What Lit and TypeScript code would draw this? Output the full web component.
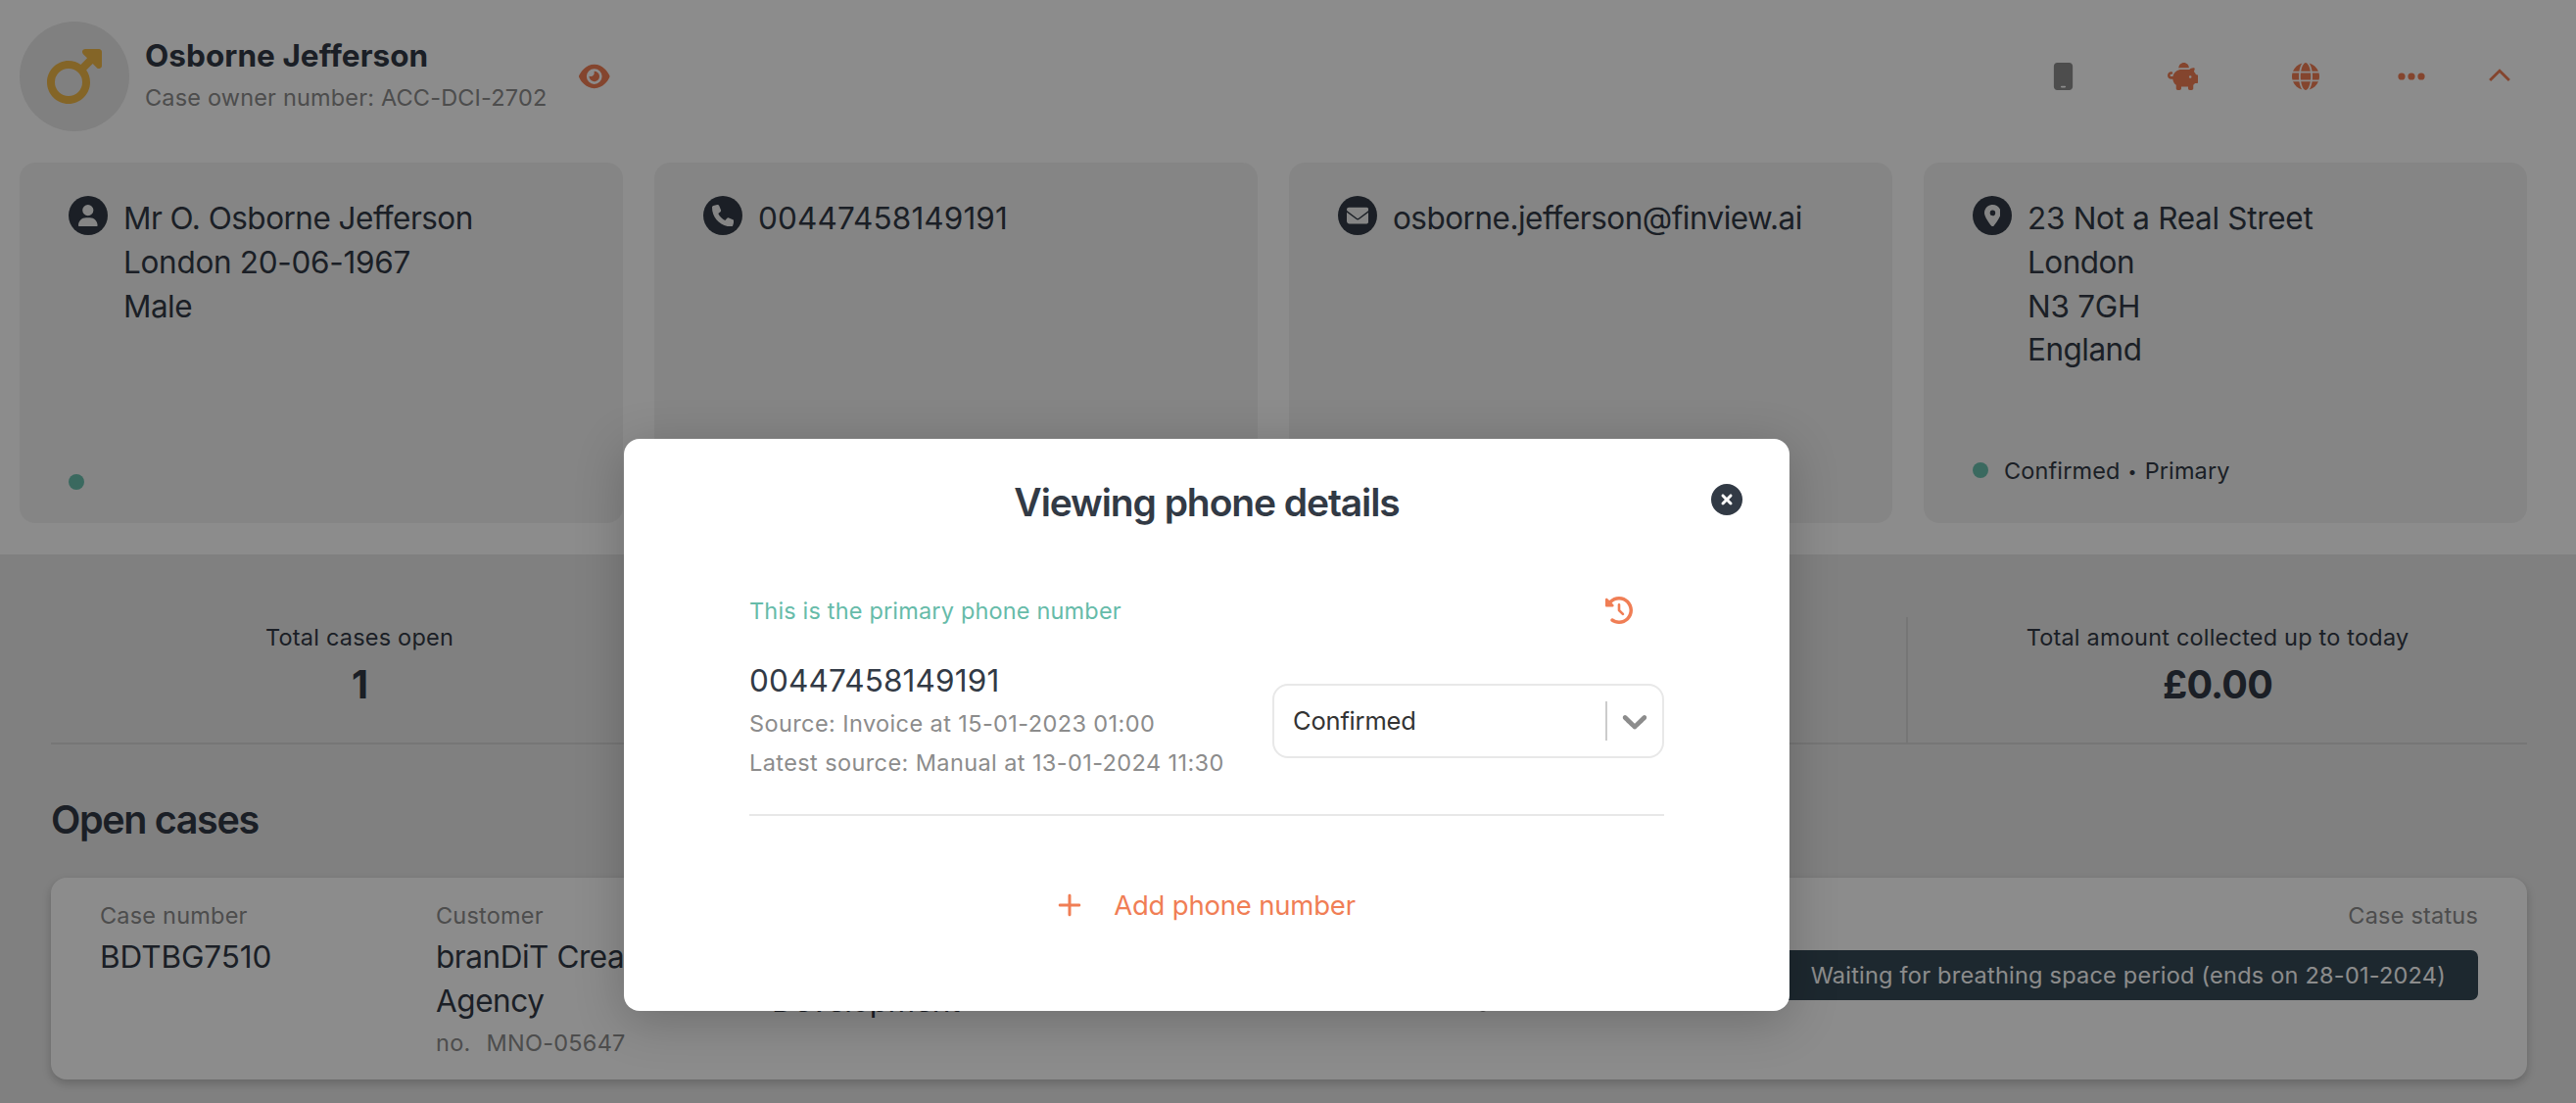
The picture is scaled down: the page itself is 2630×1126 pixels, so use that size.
import { LitElement, html, css, svg } from 'lit';
import { customElement, property } from 'lit/decorators.js';

// glyph outlines, [viewBox width, path], all on a 512 high box
const icons: Record<string, [number, string]> = {
  mars: [448, 'M289.8 46.8c3.7-9 12.5-14.8 22.2-14.8H424c13.3 0 24 10.7 24 24V168c0 9.7-5.8 18.5-14.8 22.2s-19.3 1.7-26.2-5.2l-33.4-33.4L321 204.2c19.5 28.4 31 62.7 31 99.8c0 97.2-78.8 176-176 176S0 401.2 0 304s78.8-176 176-176c37 0 71.4 11.4 99.8 31l52.6-52.6L295 73c-6.9-6.9-8.9-17.2-5.2-26.2zM176 416a112 112 0 1 0 0-224 112 112 0 1 0 0 224z'],
  eye: [576, 'M288 32c-80.8 0-145.5 36.8-192.6 80.6C48.6 156 17.3 208 2.5 243.7c-3.3 7.9-3.3 16.7 0 24.6C17.3 304 48.6 356 95.4 399.4C142.5 443.2 207.2 480 288 480s145.5-36.8 192.6-80.6c46.8-43.5 78.1-95.4 93-131.1c3.3-7.9 3.3-16.7 0-24.6c-14.9-35.7-46.2-87.7-93-131.1C433.5 68.8 368.8 32 288 32zM144 256a144 144 0 1 1 288 0 144 144 0 1 1 -288 0zm144-64c0 35.3-28.7 64-64 64c-7.1 0-13.9-1.2-20.3-3.3c-5.5-1.8-11.9 1.6-11.7 7.4c.3 6.9 1.3 13.8 3.2 20.7c13.7 51.2 66.4 81.6 117.6 67.9s81.6-66.4 67.9-117.6c-11.1-41.5-47.8-69.4-88.6-71.1c-5.8-.2-9.2 6.1-7.4 11.7c2.1 6.4 3.3 13.2 3.3 20.3z'],
  mobile: [384, 'M16 64C16 28.7 44.7 0 80 0H304c35.3 0 64 28.7 64 64V448c0 35.3-28.7 64-64 64H80c-35.3 0-64-28.7-64-64V64zM144 448c0 8.8 7.2 16 16 16h64c8.8 0 16-7.2 16-16s-7.2-16-16-16H160c-8.8 0-16 7.2-16 16z'],
  piggy: [576, 'M400 96l0 .7c-5.3-.4-10.6-.7-16-.7H256c-16.5 0-32.5 2.1-47.8 6c-.1-2-.2-4-.2-6c0-53 43-96 96-96s96 43 96 96zm-16 32c3.5 0 7 .1 10.4 .3c4.2 .3 8.4 .7 12.6 1.3C424.6 109.1 450.8 96 480 96h11.5c10.4 0 18 9.8 15.5 19.9l-13.8 55.2c15.8 14.8 28.7 32.8 37.5 52.9H544c17.7 0 32 14.3 32 32v96c0 17.7-14.3 32-32 32H512c-9.1 12.1-19.9 22.9-32 32v64c0 17.7-14.3 32-32 32H416c-17.7 0-32-14.3-32-32V448H256v32c0 17.7-14.3 32-32 32H192c-17.7 0-32-14.3-32-32V416c-34.9-26.2-58.7-66.3-63.2-112H68c-37.6 0-68-30.4-68-68s30.4-68 68-68h4c13.3 0 24 10.7 24 24s-10.7 24-24 24H68c-11 0-20 9-20 20s9 20 20 20H99.2c12.1-59.8 57.7-107.5 116.3-122.8c12.9-3.4 26.5-5.2 40.5-5.2H384zm64 136a24 24 0 1 0 -48 0 24 24 0 1 0 48 0z'],
  globe: [512, 'M352 256c0 22.2-1.2 43.6-3.3 64H163.3c-2.2-20.4-3.3-41.8-3.3-64s1.2-43.6 3.3-64H348.7c2.2 20.4 3.3 41.8 3.3 64zm28.8-64H503.9c5.3 20.5 8.1 41.9 8.1 64s-2.8 43.5-8.1 64H380.8c2.1-20.6 3.2-42 3.2-64s-1.1-43.4-3.2-64zm112.6-32H376.7c-10-63.9-29.8-117.4-55.3-151.6c78.3 20.7 142 77.5 171.9 151.6zm-149.1 0H167.7c6.1-36.4 15.5-68.6 27-94.7c10.5-23.6 22.2-40.7 33.5-51.5C239.4 3.2 248.7 0 256 0s16.6 3.2 27.8 13.8c11.3 10.8 23 27.9 33.5 51.5c11.6 26 20.9 58.2 27 94.7zm-209 0H18.6C48.6 85.9 112.2 29.1 190.6 8.4C165.1 42.6 145.3 96.1 135.3 160zM8.1 192H131.2c-2.1 20.6-3.2 42-3.2 64s1.1 43.4 3.2 64H8.1C2.8 299.5 0 278.1 0 256s2.8-43.5 8.1-64zM194.7 446.6c-11.6-26-20.9-58.2-27-94.6H344.3c-6.1 36.4-15.5 68.6-27 94.6c-10.5 23.6-22.2 40.7-33.5 51.5C272.6 508.8 263.3 512 256 512s-16.6-3.2-27.8-13.8c-11.3-10.8-23-27.9-33.5-51.5zM135.3 352c10 63.9 29.8 117.4 55.3 151.6C112.2 482.9 48.6 426.1 18.6 352H135.3zm358.1 0c-30 74.1-93.6 130.9-171.9 151.6c25.5-34.2 45.2-87.7 55.3-151.6H493.4z'],
  ellipsis: [512, 'M7 256a66 66 0 1 1 132 0a66 66 0 1 1-132 0zM190 256a66 66 0 1 1 132 0a66 66 0 1 1-132 0zM373 256a66 66 0 1 1 132 0a66 66 0 1 1-132 0z'],
  up: [512, 'M256 112L455 311L418 348L256 186L94 348L57 311z'],
  user: [448, 'M224 256A128 128 0 1 0 224 0a128 128 0 1 0 0 256zm-45.7 48C79.8 304 0 383.8 0 482.3C0 498.7 13.3 512 29.7 512H418.3c16.4 0 29.7-13.3 29.7-29.7C448 383.8 368.2 304 269.7 304H178.3z'],
  phone: [512, 'M164.9 24.6c-7.7-18.6-28-28.5-47.4-23.2l-88 24C12.1 30.2 0 46 0 64C0 311.4 200.6 512 448 512c18 0 33.8-12.1 38.6-29.5l24-88c5.3-19.4-4.6-39.7-23.2-47.4l-96-40c-16.3-6.8-35.2-2.1-46.3 11.6L304.7 368C234.3 334.7 177.3 277.7 144 207.3L193.3 167c13.7-11.2 18.4-30 11.6-46.3l-40-96z'],
  envelope: [512, 'M48 64C21.5 64 0 85.5 0 112c0 15.1 7.1 29.3 19.2 38.4L236.8 313.6c11.4 8.5 27 8.5 38.4 0L492.8 150.4c12.1-9.1 19.2-23.3 19.2-38.4c0-26.5-21.5-48-48-48H48zM0 176V384c0 35.3 28.7 64 64 64H448c35.3 0 64-28.7 64-64V176L294.4 339.2c-22.8 17.1-54 17.1-76.8 0L0 176z'],
  pin: [384, 'M215.7 499.2C267 435 384 279.4 384 192C384 86 298 0 192 0S0 86 0 192c0 87.4 117 243 168.3 307.2c12.3 15.3 35.1 15.3 47.4 0zM192 128a64 64 0 1 1 0 128 64 64 0 1 1 0-128z'],
  history: [512, 'M75 75L41 41C25.9 25.9 0 36.6 0 57.9V168c0 13.3 10.7 24 24 24H134.1c21.4 0 32.1-25.9 17-41l-30.8-30.8C155 85.5 203 64 256 64c106 0 192 86 192 192s-86 192-192 192c-40.8 0-78.6-12.7-109.7-34.4c-14.5-10.1-34.4-6.6-44.6 7.9s-6.6 34.4 7.9 44.6C151.2 495 201.7 512 256 512c141.4 0 256-114.6 256-256S397.4 0 256 0C185.3 0 121.3 28.7 75 75zm181 53c-13.3 0-24 10.7-24 24V256c0 6.4 2.5 12.5 7 17l72 72c9.4 9.4 24.6 9.4 33.9 0s9.4-24.6 0-33.9l-65-65V152c0-13.3-10.7-24-24-24z'],
  close: [512, 'M256 512A256 256 0 1 0 256 0a256 256 0 1 0 0 512zM175 175c9.4-9.4 24.6-9.4 33.9 0l47 47 47-47c9.4-9.4 24.6-9.4 33.9 0s9.4 24.6 0 33.9l-47 47 47 47c9.4 9.4 9.4 24.6 0 33.9s-24.6 9.4-33.9 0l-47-47-47 47c-9.4 9.4-24.6 9.4-33.9 0s-9.4-24.6 0-33.9l47-47-47-47c-9.4-9.4-9.4-24.6 0-33.9z'],
  plus: [512, 'M256 16c20 0 32 12 32 32V224H464c20 0 32 12 32 32s-12 32-32 32H288V464c0 20-12 32-32 32s-32-12-32-32V288H48c-20 0-32-12-32-32s12-32 32-32H224V48c0-20 12-32 32-32z'],
};

/**
 * Single glyph, scaled to the given height
 */
@customElement('fv-icon')
export class Icon extends LitElement {

  @property() name = '';

  @property({ type: Number }) size = 28;

  static styles = css`
    :host {
      display: inline-flex;
    }
    svg {
      display: block;
      fill: currentColor;
    }
  `;

  render () {
    const [width, path] = icons[this.name];

    return html`
      <svg width=${this.size * width / 512} height=${this.size} viewBox="0 0 ${width} 512">
        ${svg`<path fill-rule="evenodd" d=${path}></path>`}
      </svg>
    `;
  }

}

/**
 * Grey contact card: icon, a few lines of text and an optional status
 */
@customElement('fv-card')
export class Card extends LitElement {

  @property() icon = '';

  @property({ attribute: false }) lines: string[] = [];

  @property({ attribute: false }) status: string[] | null = null;

  static styles = css`
    :host {
      display: flex;
      flex-direction: column;
      justify-content: space-between;
      box-sizing: border-box;
      height: 368px;
      padding: 34px 50px;
      border-radius: 16px;
      background: #f3f3f3;
    }
    .top {
      display: flex;
      gap: 16px;
    }
    .badge {
      display: flex;
      align-items: center;
      justify-content: center;
      width: 40px;
      height: 40px;
      border-radius: 50%;
      background: #323a45;
      color: #f3f3f3;
    }
    .lines {
      padding-top: 1px;
      font-size: 31.5px;
      line-height: 44.8px;
      letter-spacing: -0.52px;
    }
    /* lines with figures are set a bit wider */
    .figures {
      letter-spacing: -0.3px;
    }
    .phone {
      letter-spacing: 0.12px;
    }
    .status {
      display: flex;
      align-items: center;
      font-size: 23.5px;
      line-height: 38px;
      letter-spacing: 0.12px;
    }
    .status span {
      padding-top: 2px;
    }
    .status .dot {
      box-sizing: border-box;
      width: 16px;
      height: 16px;
      margin-right: 16px;
      border-radius: 50%;
      background: #6bc0ae;
    }
    .bullet {
      margin: 1px 8px 0;
      font-size: 16px;
    }
  `;

  lineClass (line: string) {
    if (/^\d+$/.test(line)) return 'phone';
    return /\d/.test(line) ? 'figures' : '';
  }

  render () {

    return html`
      <div class="top">
        <div class="badge"><fv-icon name=${this.icon} size="22.4"></fv-icon></div>
        <div class="lines">${this.lines.map(line => html`<div class=${this.lineClass(line)}>${line}</div>`)}</div>
      </div>
      ${this.status ? html`
        <div class="status">
          <span class="dot"></span>
          ${this.status.map((part, i) => html`${i ? html`<span class="bullet">•</span>` : ''}<span>${part}</span>`)}
        </div>
      ` : ''}
    `;

  }

}

/**
 * Modal with the details of one phone number
 */
@customElement('fv-phone-modal')
export class PhoneModal extends LitElement {

  static styles = css`
    :host {
      display: block;
      box-sizing: border-box;
      width: 1190px;
      height: 584px;
      border-radius: 16px;
      background: #fff;
      box-shadow: 0 10px 50px rgba(0, 0, 0, 0.22);
    }
    .head {
      display: grid;
      grid-template-columns: 80px 1fr 80px;
      align-items: start;
      box-sizing: border-box;
      padding-top: 32px;
      height: 92px;
    }
    .head fv-icon {
      margin-top: 14px;
    }
    h2 {
      grid-column: 2;
      margin: 0;
      text-align: center;
      font-size: 39px;
      line-height: 65px;
      font-weight: 600;
      letter-spacing: -1.1px;
    }
    .body {
      padding: 0 128px;
    }
    .primary {
      display: flex;
      align-items: center;
      justify-content: space-between;
      padding: 65px 32px 0 0;
      height: 36px;
      font-size: 23.5px;
      letter-spacing: 0.17px;
      color: #66bba9;
    }
    .action {
      color: #f07e55;
    }
    .row {
      display: flex;
      align-items: center;
      justify-content: space-between;
      box-sizing: border-box;
      height: 192px;
      padding-bottom: 1px;
      border-bottom: 2px solid #e8e8e8;
    }
    .number {
      font-size: 31.5px;
      line-height: 46px;
      padding-bottom: 1px;
      letter-spacing: 0.15px;
    }
    .source {
      font-size: 23.5px;
      line-height: 40px;
      letter-spacing: 0.4px;
      color: #8c8c8c;
    }
    .select {
      display: flex;
      align-items: center;
      box-sizing: border-box;
      width: 400px;
      height: 76px;
      border: 2px solid #e8e8e8;
      border-radius: 16px;
      color: #333;
      font-size: 25.5px;
      letter-spacing: -0.2px;
    }
    .value {
      flex: 1;
      padding-left: 19px;
    }
    .separator {
      width: 2px;
      height: 40px;
      background: #ccc;
    }
    .arrow {
      display: block;
      margin: 0 7px;
      fill: #8c8c8c;
    }
    .add {
      display: flex;
      align-items: center;
      justify-content: center;
      gap: 33px;
      padding-top: 69px;
      height: 44px;
      font-size: 27.5px;
      letter-spacing: -0.2px;
    }
  `;

  render () {

    return html`
      <div class="head">
        <h2>Viewing phone details</h2>
        <fv-icon name="close" size="32"></fv-icon>
      </div>
      <div class="body">
        <div class="primary">
          <span>This is the primary phone number</span>
          <fv-icon class="action" name="history" size="28"></fv-icon>
        </div>
        <div class="row">
          <div>
            <div class="number">00447458149191</div>
            <div class="source">Source: Invoice at 15-01-2023 01:00</div>
            <div class="source">Latest source: Manual at 13-01-2024 11:30</div>
          </div>
          <div class="select">
            <span class="value">Confirmed</span>
            <span class="separator"></span>
            <svg class="arrow" width="42" height="42" viewBox="0 0 20 20">
              <path d="M4.516 7.548c0.436-0.446 1.043-0.481 1.576 0l3.908 3.747 3.908-3.747c0.533-0.481 1.141-0.446 1.574 0 0.436 0.445 0.408 1.197 0 1.615-0.406 0.418-4.695 4.502-4.695 4.502-0.217 0.223-0.502 0.335-0.787 0.335s-0.57-0.112-0.789-0.335c0 0-4.287-4.084-4.695-4.502s-0.436-1.17 0-1.615z"></path>
            </svg>
          </div>
        </div>
        <div class="add action">
          <fv-icon name="plus" size="24"></fv-icon>
          <span>Add phone number</span>
        </div>
      </div>
    `;

  }

}

@customElement('app-root')
export default class App extends LitElement {

  static styles = css`
    :host {
      display: block;
      position: relative;
      width: 2630px;
      height: 1126px;
      overflow: hidden;
      background: #e9e9e9;
      color: #323a45;
      font-family: Inter, "Liberation Sans", sans-serif;
      font-size: 23.5px;
      letter-spacing: 0.2px;
    }
    .profile {
      box-sizing: border-box;
      height: 566px;
      padding: 22px 50px 0 20px;
      background: #fff;
    }
    .bar {
      display: flex;
      align-items: center;
      height: 112px;
    }
    .avatar {
      display: flex;
      align-items: center;
      justify-content: center;
      width: 112px;
      height: 112px;
      border-radius: 50%;
      background: #e9e9e9;
      color: #f0b848;
    }
    .owner {
      margin-left: 16px;
      width: 443px;
    }
    .name {
      font-size: 31.5px;
      line-height: 41px;
      padding-bottom: 3px;
      font-weight: 700;
      letter-spacing: 0.05px;
    }
    .muted {
      color: #8c8c8c;
    }
    .ref {
      line-height: 40px;
      letter-spacing: 0.17px;
    }
    .action {
      color: #f07e55;
    }
    .tools {
      display: flex;
      align-items: center;
      margin-left: auto;
      padding-right: 14px;
    }
    .tools fv-icon {
      margin-left: 96px;
    }
    .tools .near {
      margin-left: 80px;
    }
    .tools .last {
      margin-left: 62px;
    }
    .cards {
      display: grid;
      grid-template-columns: repeat(4, 1fr);
      gap: 32px;
      margin-top: 32px;
    }
    .overview {
      padding: 64px 50px 0 52px;
    }
    .stats {
      display: grid;
      grid-template-columns: repeat(4, 1fr);
      border-bottom: 2px solid #d8d8d8;
    }
    .stat {
      box-sizing: border-box;
      height: 128px;
      padding-top: 4px;
      border-right: 2px solid #d8d8d8;
      text-align: center;
      line-height: 33px;
    }
    .stat:last-child {
      border-right: 0;
    }
    .stat b {
      display: block;
      font-size: 39.5px;
      line-height: 64px;
      letter-spacing: -0.8px;
    }
    h3 {
      margin: 47px 0 29px;
      font-size: 39.5px;
      line-height: 60px;
      font-weight: 600;
      letter-spacing: -1.35px;
    }
    .case {
      display: grid;
      grid-template-columns: 343px 343px 1fr 1fr auto;
      box-sizing: border-box;
      height: 206px;
      padding: 19px 50px 0;
      border-radius: 16px;
      background: #fff;
      box-shadow: 0 4px 10px rgba(0, 0, 0, 0.2);
      line-height: 39px;
    }
    .big {
      font-size: 31.5px;
      line-height: 45px;
      letter-spacing: -0.45px;
    }
    .id {
      letter-spacing: -0.1px;
    }
    .no {
      display: flex;
      gap: 16px;
      line-height: 42px;
      letter-spacing: 0.25px;
    }
    .mark {
      width: 10px;
      height: 10px;
      margin: 108px 0 0 207px;
      border-radius: 50%;
      background: #8c8c8c;
    }
    .right {
      text-align: right;
    }
    .state {
      margin-top: 16px;
      padding: 0 33px;
      border-radius: 7px;
      background: #354a57;
      color: #fff;
      line-height: 51px;
      letter-spacing: 0.23px;
    }
    .overlay {
      position: absolute;
      inset: 0;
      background: rgba(0, 0, 0, 0.45);
    }
    .dialog {
      position: absolute;
      left: 637px;
      top: 448px;
    }
  `;

  render () {

    return html`
      <div class="profile">
        <div class="bar">
          <div class="avatar"><fv-icon name="mars" size="64"></fv-icon></div>
          <div class="owner">
            <div class="name">Osborne Jefferson</div>
            <div class="ref muted">Case owner number: ACC-DCI-2702</div>
          </div>
          <fv-icon class="action" name="eye"></fv-icon>
          <div class="tools action">
            <fv-icon class="muted" name="mobile"></fv-icon>
            <fv-icon name="piggy"></fv-icon>
            <fv-icon name="globe"></fv-icon>
            <fv-icon class="near" name="ellipsis"></fv-icon>
            <fv-icon class="last" name="up"></fv-icon>
          </div>
        </div>
        <div class="cards">
          <fv-card icon="user" .lines=${['Mr O. Osborne Jefferson', 'London 20-06-1967', 'Male']} .status=${[]}></fv-card>
          <fv-card icon="phone" .lines=${['00447458149191']}></fv-card>
          <fv-card icon="envelope" .lines=${['osborne.jefferson@finview.ai']}></fv-card>
          <fv-card icon="pin" .lines=${['23 Not a Real Street', 'London', 'N3 7GH', 'England']} .status=${['Confirmed', 'Primary']}></fv-card>
        </div>
      </div>
      <div class="overview">
        <div class="stats">
          <div class="stat">Total cases open<b>1</b></div>
          <div class="stat"></div>
          <div class="stat"></div>
          <div class="stat">Total amount collected up to today<b>£0.00</b></div>
        </div>
        <h3>Open cases</h3>
        <div class="case">
          <div>
            <div class="muted">Case number</div>
            <div class="big id">BDTBG7510</div>
          </div>
          <div>
            <div class="muted">Customer</div>
            <div class="big">branDiT Creative<br>Agency</div>
            <div class="no muted"><span>no.</span><span>MNO-05647</span></div>
          </div>
          <div>
            <div class="muted">&nbsp;</div>
            <div class="big">&nbsp;<br>Development</div>
          </div>
          <div><div class="mark"></div></div>
          <div class="right">
            <div class="muted">Case status</div>
            <div class="state">Waiting for breathing space period (ends on 28-01-2024)</div>
          </div>
        </div>
      </div>
      <div class="overlay"></div>
      <fv-phone-modal class="dialog"></fv-phone-modal>
    `;

  }

}
